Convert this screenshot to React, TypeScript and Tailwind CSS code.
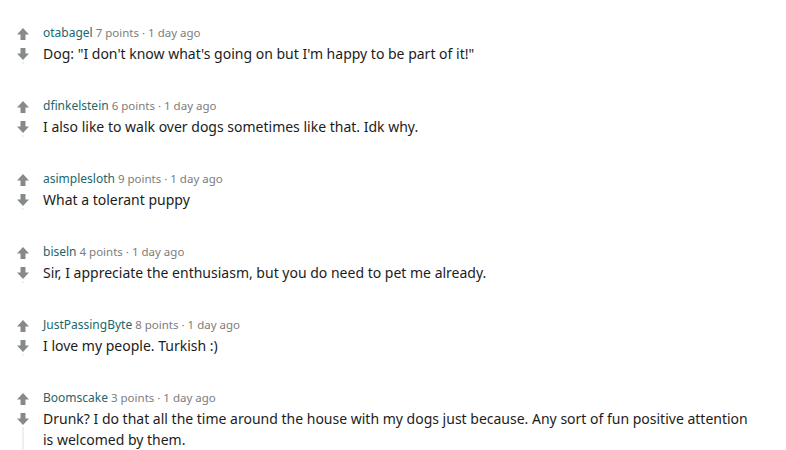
import React from "react";

const comments = [
  { user: "otabagel", points: 7, body: "Dog: \"I don't know what's going on but I'm happy to be part of it!\"" },
  { user: "dfinkelstein", points: 6, body: "I also like to walk over dogs sometimes like that. Idk why." },
  { user: "asimplesloth", points: 9, body: "What a tolerant puppy" },
  { user: "biseln", points: 4, body: "Sir, I appreciate the enthusiasm, but you do need to pet me already." },
  { user: "JustPassingByte", points: 8, body: "I love my people. Turkish :)" },
  {
    user: "Boomscake",
    points: 3,
    body: "Drunk? I do that all the time around the house with my dogs just because. Any sort of fun positive attention is welcomed by them.",
  },
];

function Up() {
  return (
    <svg width="12" height="12" viewBox="0 0 12 12" className="block">
      <path d="M6 0 L12 6.5 L8.5 6.5 L8.5 12 L3.5 12 L3.5 6.5 L0 6.5 Z" fill="#878a8c" />
    </svg>
  );
}

function Down() {
  return (
    <svg width="12" height="12" viewBox="0 0 12 12" className="block">
      <path d="M6 12 L12 5.5 L8.5 5.5 L8.5 0 L3.5 0 L3.5 5.5 L0 5.5 Z" fill="#878a8c" />
    </svg>
  );
}

export default function App() {
  return (
    <div
      className="w-[786px] h-[450px] overflow-hidden bg-white pt-[25px]"
      style={{ fontFamily: '"Noto Sans", "Open Sans", sans-serif' }}
    >
      {comments.map((c) => (
        <div key={c.user} className="flex pb-[34px]">
          <div className="w-[43px] shrink-0 flex flex-col items-start pl-[17px] pt-[3px]">
            <Up />
            <div className="mt-[8px]">
              <Down />
            </div>
            <div className="flex-1 w-[2px] bg-[#edeff1] ml-[5px] mt-[2px] mb-0" />
          </div>
          <div className="w-[712px]">
            <div className="text-[11.5px] leading-[16px] text-[#7c7c7c]">
              <span className="text-[12px] text-[#21676b]">{c.user}</span> {c.points} points · 1 day ago
            </div>
            <div className="mt-[2px] text-[14px] leading-[21px] text-[#1c1c1c]">{c.body}</div>
          </div>
        </div>
      ))}
    </div>
  );
}
